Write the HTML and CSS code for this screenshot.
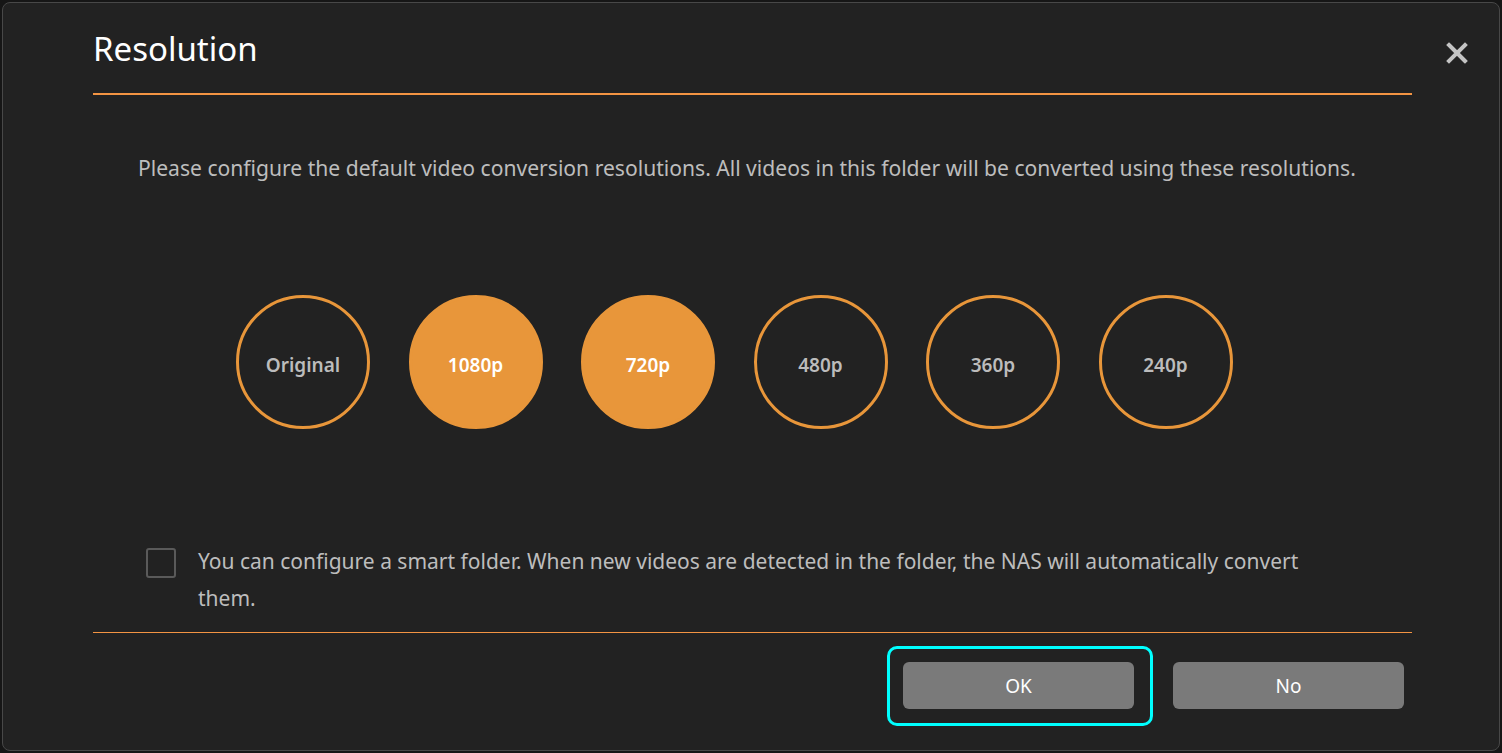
FILE: index.html
```html
<!DOCTYPE html>
<html lang="en">
<head>
  <meta charset="UTF-8">
  <title>Resolution</title>
  <link rel="stylesheet" href="styles.css">
</head>
<body>
  <div class="dialog">
    <button class="close" aria-label="Close">
      <svg width="22" height="22" viewBox="0 0 22 22">
        <path d="M3 3 L19 19 M19 3 L3 19" stroke="#c4c4c4" stroke-width="4" stroke-linecap="square"/>
      </svg>
    </button>

    <div class="content">
      <div class="header">
        <h1>Resolution</h1>
      </div>

      <p class="desc">Please configure the default video conversion resolutions. All videos in this folder will be converted using these resolutions.</p>

      <div class="res-list">
        <div class="res">Original</div>
        <div class="res selected">1080p</div>
        <div class="res selected">720p</div>
        <div class="res">480p</div>
        <div class="res">360p</div>
        <div class="res">240p</div>
      </div>

      <label class="smart">
        <span class="check"></span>
        <span class="smart-text">You can configure a smart folder. When new videos are detected in the folder, the NAS will automatically convert them.</span>
      </label>

      <div class="footer">
        <div class="focus-ring">
          <button class="btn">OK</button>
        </div>
        <button class="btn">No</button>
      </div>
    </div>
  </div>
</body>
</html>
```

FILE: styles.css
```css
body {
  margin: 0;
  background-color: #161616;
  font-family: "Noto Sans", "Open Sans", sans-serif;
  overflow: hidden;
}
.dialog {
  position: relative;
  margin: 2px 2px 0 2px;
  height: 749px;
  box-sizing: border-box;
  background-color: #222222;
  border: 1px solid #484848;
  border-radius: 8px;
}
.close {
  position: absolute;
  top: 39px;
  right: 31px;
  background: none;
  border: none;
  padding: 0;
  cursor: pointer;
  line-height: 0;
}
.content {
  margin: 0 87px 0 90px;
}
.header {
  height: 90px;
  border-bottom: 2px solid #f39443;
}
h1 {
  margin: 0;
  padding-top: 26px;
  font-size: 33px;
  font-weight: 400;
  line-height: 1.2;
  color: #ffffff;
}
.desc {
  margin: 58px 0 0 0;
  padding: 0 45px;
  font-size: 21.1px;
  line-height: 30px;
  color: #bdbdbd;
}
.res-list {
  display: flex;
  gap: 38.5px;
  padding-left: 143px;
  margin-top: 112px;
}
.res {
  width: 134px;
  height: 134px;
  box-sizing: border-box;
  border: 3px solid #e8963a;
  border-radius: 50%;
  padding-top: 6px;
  display: flex;
  align-items: center;
  justify-content: center;
  font-size: 19px;
  font-weight: 600;
  color: #bcbcbc;
  cursor: pointer;
}
.res.selected {
  background-color: #e8963a;
  color: #ffffff;
}
.smart {
  display: flex;
  align-items: flex-start;
  gap: 22px;
  margin-top: 119px;
  padding: 0 80px 0 53px;
  cursor: pointer;
}
.check {
  flex: none;
  width: 30px;
  height: 30px;
  box-sizing: border-box;
  border: 2px solid #5a5a5a;
  border-radius: 3px;
}
.smart-text {
  margin-top: -5px;
  font-size: 21px;
  line-height: 37px;
  color: #bdbdbd;
}
.footer {
  margin-top: 15px;
  border-top: 1px solid #f39443;
  display: flex;
  justify-content: flex-end;
  align-items: flex-start;
  gap: 20px;
  padding-top: 13px;
  padding-right: 8px;
}
.footer > .btn {
  margin-top: 16px;
}
.focus-ring {
  padding: 13px 16px 14px 13px;
  border: 3px solid #00ffff;
  border-radius: 10px;
}
.btn {
  display: block;
  width: 231px;
  height: 47px;
  background-color: #7a7a7a;
  color: #ffffff;
  border: none;
  border-radius: 6px;
  font-family: inherit;
  font-size: 19px;
  cursor: pointer;
}
```
